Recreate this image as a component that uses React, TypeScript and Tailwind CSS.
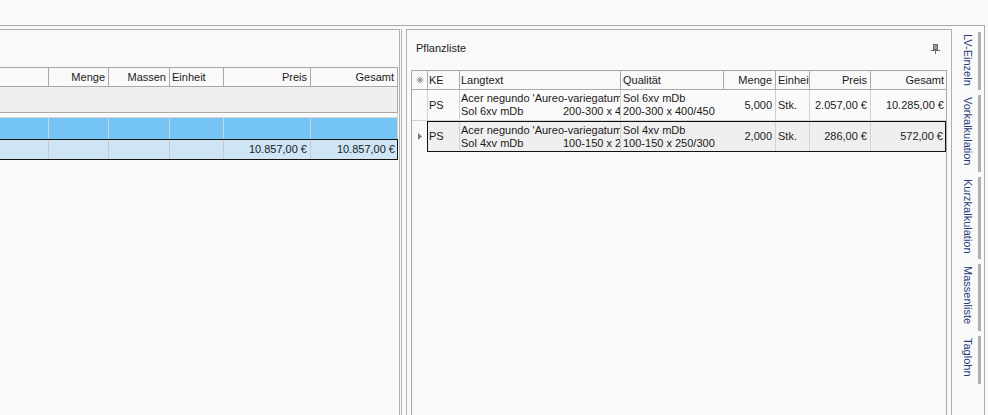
const leftCols = [
  { label: "", w: "w-[49px]", align: "left" },
  { label: "Menge", w: "w-[60px]", align: "right" },
  { label: "Massen", w: "w-[61px]", align: "right" },
  { label: "Einheit", w: "w-[54px]", align: "left" },
  { label: "Preis", w: "w-[87px]", align: "right" },
  { label: "Gesamt", w: "w-[87px]", align: "right" },
];

const rows = [
  {
    ke: "PS",
    lang: "Acer negundo 'Aureo-variegatum'",
    sol: "Sol 6xv mDb",
    size: "200-300 x 400/450",
    qual: "Sol 6xv mDb",
    qual2: "200-300 x 400/450",
    menge: "5,000",
    einheit: "Stk.",
    preis: "2.057,00 €",
    gesamt: "10.285,00 €",
  },
  {
    ke: "PS",
    lang: "Acer negundo 'Aureo-variegatum'",
    sol: "Sol 4xv mDb",
    size: "100-150 x 250/300",
    qual: "Sol 4xv mDb",
    qual2: "100-150 x 250/300",
    menge: "2,000",
    einheit: "Stk.",
    preis: "286,00 €",
    gesamt: "572,00 €",
  },
];

const tabs = [
  { label: "LV-Einzeln", h: "h-[58px]" },
  { label: "Vorkalkulation", h: "h-[77px]" },
  { label: "Kurzkalkulation", h: "h-[82px]" },
  { label: "Massenliste", h: "h-[67px]" },
  { label: "Taglohn", h: "h-[48px]" },
];

const Asterisk = () => (
  <svg width="8" height="8" viewBox="0 0 8 8" stroke="#8a8a8a" strokeWidth="1">
    <line x1="4" y1="0.5" x2="4" y2="7.5" />
    <line x1="0.5" y1="4" x2="7.5" y2="4" />
    <line x1="1.5" y1="1.5" x2="6.5" y2="6.5" />
    <line x1="6.5" y1="1.5" x2="1.5" y2="6.5" />
  </svg>
);

const Pin = () => (
  <svg width="9" height="10" viewBox="0 0 9 10" fill="none" stroke="#6a6a6a" strokeWidth="1">
    <rect x="2.5" y="0.5" width="4" height="5" fill="#9a9a9a" />
    <line x1="0" y1="6.5" x2="9" y2="6.5" />
    <line x1="4.5" y1="7" x2="4.5" y2="10" />
  </svg>
);

const RowCells = ({ r }: { r: (typeof rows)[number] }) => (
  <>
    <div className="w-[32px] shrink-0 border-r border-[#d2d2d2] flex items-center px-[1px]">{r.ke}</div>
    <div className="w-[161px] shrink-0 border-r border-[#d2d2d2] flex flex-col justify-center px-[1px] overflow-hidden whitespace-nowrap leading-[13px]">
      <div>{r.lang}</div>
      <div className="flex">
        <span className="w-[102px] shrink-0">{r.sol}</span>
        <span>{r.size}</span>
      </div>
    </div>
    <div className="w-[103px] shrink-0 flex flex-col justify-center pl-[2px] overflow-hidden whitespace-nowrap leading-[13px]">
      <div>{r.qual}</div>
      <div>{r.qual2}</div>
    </div>
    <div className="w-[52px] shrink-0 border-r border-[#d2d2d2] flex items-center justify-end pr-[3px]">{r.menge}</div>
    <div className="w-[34px] shrink-0 border-r border-[#d2d2d2] flex items-center px-[2px] overflow-hidden">{r.einheit}</div>
    <div className="w-[61px] shrink-0 border-r border-[#d2d2d2] flex items-center justify-end pr-[3px] whitespace-nowrap">{r.preis}</div>
    <div className="flex-1 flex items-center justify-end pr-[2px] whitespace-nowrap">{r.gesamt}</div>
  </>
);

export default function App() {
  return (
    <div className="w-[988px] h-[415px] overflow-hidden bg-[#f9f9f9] text-[11px] text-[#1a1a1a] font-['Liberation_Sans',Arial,sans-serif]">
      <div className="h-[25px]" />
      <div className="flex w-[985px] h-[400px] border-t border-r border-[#ababab]">
        {/* panels */}
        <div className="flex pt-[3px]">
          {/* left panel */}
          <div className="w-[400px] border-t border-r border-[#b0b0b0] overflow-hidden">
            <div className="mt-[37px] w-[398px]">
              <div className="flex h-[20px] border-t border-b border-[#a9a9a9]">
                {leftCols.map((c, i) => (
                  <div
                    key={i}
                    className={`${c.w} shrink-0 border-r border-[#a9a9a9] flex items-center ${
                      c.align === "right" ? "justify-end pr-[3px]" : "pl-[2px]"
                    }`}
                  >
                    {c.label}
                  </div>
                ))}
              </div>
              <div className="h-[26px] bg-[#efefef] border-b border-r border-[#a9a9a9]" />
              <div className="h-[5px] bg-[#fbfbfb] border-b border-r border-[#d6d6d6]" />
              <div className="flex h-[21px] bg-[#75c4f6]">
                {leftCols.map((c, i) => (
                  <div key={i} className={`${c.w} shrink-0 border-r border-[#d0d4d8]`} />
                ))}
              </div>
              <div className="flex h-[21px] bg-[#cde5f7] border border-l-0 border-[#1a1208]">
                {leftCols.map((c, i) => (
                  <div
                    key={i}
                    className={`${c.w} shrink-0 ${i < 5 ? "border-r border-[#c8c8c8]" : "w-[86px]"} flex items-center justify-end pr-[3px] whitespace-nowrap`}
                  >
                    {i >= 4 ? "10.857,00 €" : ""}
                  </div>
                ))}
              </div>
            </div>
          </div>

          {/* splitter */}
          <div className="ml-[1px] w-[5px] border-l border-[#b0b0b0]" />

          {/* right panel */}
          <div className="w-[546px] border-l border-t border-r border-[#b0b0b0] flex flex-col">
            <div className="h-[40px] flex items-start justify-between pl-[9px] pr-[11px] pt-[12px]">
              <span className="leading-[13px] text-[#222]">Pflanzliste</span>
              <span className="pt-[2px]">
                <Pin />
              </span>
            </div>
            <div className="ml-[4px] w-[536px] flex-1 border border-[#a9a9a9]">
              {/* header */}
              <div className="flex h-[19px] border-b border-[#a9a9a9]">
                <div className="w-[16px] shrink-0 border-r border-[#a9a9a9] flex items-center justify-center">
                  <Asterisk />
                </div>
                <div className="w-[32px] shrink-0 border-r border-[#a9a9a9] flex items-center px-[1px]">KE</div>
                <div className="w-[161px] shrink-0 border-r border-[#a9a9a9] flex items-center px-[1px]">Langtext</div>
                <div className="w-[103px] shrink-0 border-r border-[#a9a9a9] flex items-center pl-[2px]">Qualität</div>
                <div className="w-[52px] shrink-0 border-r border-[#a9a9a9] flex items-center justify-end pr-[3px]">Menge</div>
                <div className="w-[34px] shrink-0 border-r border-[#a9a9a9] flex items-center pl-[2px] overflow-hidden whitespace-nowrap">Einheit</div>
                <div className="w-[61px] shrink-0 border-r border-[#a9a9a9] flex items-center justify-end pr-[3px]">Preis</div>
                <div className="flex-1 flex items-center justify-end pr-[2px]">Gesamt</div>
              </div>
              {/* row 1 */}
              <div className="flex h-[31px] border-b border-[#d2d2d2] bg-[#fafafa]">
                <div className="w-[16px] shrink-0 border-r border-[#d2d2d2]" />
                <RowCells r={rows[0]} />
              </div>
              {/* row 2 (focused) */}
              <div className="flex h-[31px]">
                <div className="w-[15px] shrink-0 flex items-center justify-center">
                  <svg width="4" height="7" viewBox="0 0 4 7">
                    <polygon points="0,0 4,3.5 0,7" fill="#7a7a7a" />
                  </svg>
                </div>
                <div className="flex flex-1 border border-[#111] bg-[#efefef]">
                  <RowCells r={rows[1]} />
                </div>
              </div>
            </div>
          </div>
        </div>

        {/* side tabs */}
        <div className="flex-1 flex flex-col pt-[6px] gap-[5px]">
          {tabs.map((t) => (
            <div key={t.label} className={`flex ${t.h}`}>
              <div className="w-[26px] pl-[9px] pt-[2px]">
                <div className="w-[13px] [writing-mode:vertical-rl] leading-[13px] whitespace-nowrap text-[#2b3b78]">
                  {t.label}
                </div>
              </div>
              <div className="w-[3px] bg-[#b0b0b0]" />
            </div>
          ))}
        </div>
      </div>
    </div>
  );
}
